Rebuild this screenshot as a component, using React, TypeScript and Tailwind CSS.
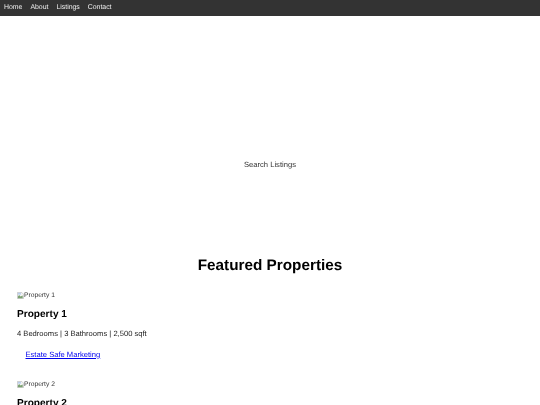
export default function App() {
  const font = { fontFamily: '"Liberation Sans", Arial, sans-serif', textRendering: "geometricPrecision" as const };
  const Broken = () => (
    <svg width="7" height="7" viewBox="0 0 8 8" className="shrink-0 -mt-[1px]">
      <path d="M.5.5h5L7.5 2.5v5H.5z" fill="#f4f4f4" stroke="#b4b4b4" strokeWidth=".7" />
      <path d="M1 7V5l1.5-1.5L4 5l2.5-1v3z" fill="#7aa06f" />
      <path d="M1 1h3.5v2H1z" fill="#b9cdee" />
    </svg>
  );
  const Prop = ({ n, link }: { n: number; link: boolean }) => (
    <div className="flex flex-col">
      <div className="flex items-center h-[10px] text-[6.7px] leading-[10px] text-[#333]">
        <Broken />
        <span>Property {n}</span>
      </div>
      <h3 className="mt-[7.5px] text-[10.1px] leading-[12px] font-bold text-black">Property {n}</h3>
      {link && (
        <>
          <p className="mt-[8.5px] text-[7.6px] leading-[10px] text-[#222]">4 Bedrooms | 3 Bathrooms | 2,500 sqft</p>
          <a href="#" className="mt-[11px] ml-[8.5px] text-[7.6px] leading-[10px] text-[#0000ee] underline">Estate Safe Marketing</a>
        </>
      )}
    </div>
  );
  return (
    <div style={font} className="w-[540px] h-[405px] overflow-hidden bg-white antialiased will-change-transform">
      <nav className="h-4 bg-[#333] flex items-center pl-1 pt-[1px] gap-[8px] text-[6.9px] text-[#f0f0f0]">
        <span>Home</span><span>About</span><span>Listings</span><span>Contact</span>
      </nav>
      <div className="h-[232px] pt-[143px] text-center text-[7.6px] leading-[12px] text-[#333]">Search Listings</div>
      <h2 className="mt-[9px] text-center text-[15.3px] leading-[18px] font-bold text-black">Featured Properties</h2>
      <div className="mt-[16px] px-[17px] flex flex-col gap-[20px]">
        <Prop n={1} link />
        <Prop n={2} link={false} />
      </div>
    </div>
  );
}
